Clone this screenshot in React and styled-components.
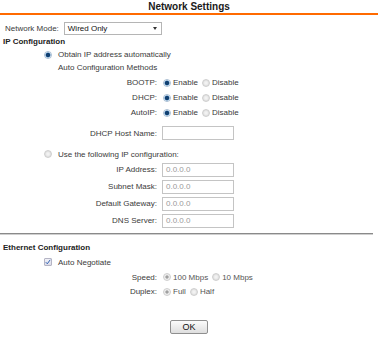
import styled, { createGlobalStyle } from "styled-components";

const GlobalStyle = createGlobalStyle`
  body {
    margin: 0;
    background: #fff;
    font-family: "Liberation Sans", Arial, sans-serif;
    font-size: 8px;
    color: #3a3a3a;
  }
`;

const Page = styled.div`
  width: 378px;
  display: flex;
  flex-direction: column;
`;

const Title = styled.h1`
  margin: 0;
  height: 13px;
  line-height: 13px;
  font-size: 10px;
  font-weight: 700;
  color: #1a1a1a;
  text-align: center;
  border-bottom: 2px solid #ff6a00;
`;

const ModeRow = styled.div`
  margin-top: 6px;
  height: 14px;
  padding-left: 5px;
  display: flex;
  align-items: center;
  gap: 5px;
`;

const SelectBox = styled.div`
  box-sizing: border-box;
  width: 98px;
  height: 13px;
  padding: 0 4px 0 3px;
  border: 1px solid #b5b5b5;
  display: flex;
  align-items: center;
  justify-content: space-between;
  color: #111;
  background: #fff;
`;

const Caret = styled.span`
  width: 0;
  height: 0;
  border-left: 2.5px solid transparent;
  border-right: 2.5px solid transparent;
  border-top: 3px solid #333;
`;

const SectionTitle = styled.div`
  margin-top: ${(p) => p.$top || 0}px;
  height: 12px;
  line-height: 12px;
  padding-left: 3px;
  font-weight: 700;
  color: #222;
`;

const OptionRow = styled.div`
  margin-top: ${(p) => p.$top || 0}px;
  height: ${(p) => p.$h || 13}px;
  padding-left: ${(p) => p.$indent || 44}px;
  display: flex;
  align-items: center;
  gap: 6px;
`;

const FieldRow = styled.div`
  margin-top: ${(p) => p.$top || 0}px;
  height: ${(p) => p.$h || 15}px;
  display: grid;
  grid-template-columns: 157px auto;
  column-gap: 5px;
  align-items: center;
`;

const Label = styled.span`
  text-align: right;
`;

const Choices = styled.div`
  display: flex;
  align-items: center;
  gap: 4px;
  padding-left: 1px;
  color: ${(p) => (p.$disabled ? "#555" : "inherit")};
`;

const Choice = styled.label`
  display: flex;
  align-items: center;
  gap: 2px;
`;

const Radio = styled.span`
  box-sizing: border-box;
  width: 8px;
  height: 8px;
  border-radius: 50%;
  flex: none;
  border: 1px solid ${(p) => (p.$checked && !p.$disabled ? "#a9bed2" : "#cfcfcf")};
  background: ${(p) =>
    p.$checked
      ? p.$disabled
        ? "radial-gradient(circle, #a0a0a0 0 1.4px, #ededed 1.8px)"
        : "radial-gradient(circle, #123f6e 0 1.6px, #3b78b4 2.2px, #e4eef7 2.8px)"
      : "radial-gradient(circle, #f2f2f2 0 1px, #dadada 3.5px)"};
`;

const Check = styled.span`
  box-sizing: border-box;
  width: 8px;
  height: 8px;
  flex: none;
  border: 1px solid #b4b4c4;
  border-radius: 1px;
  background: linear-gradient(#f2f2f8, #dcdce8);
  display: flex;
  align-items: center;
  justify-content: center;
`;

const TextBox = styled.div`
  box-sizing: border-box;
  width: 72px;
  height: 14px;
  padding-left: 3px;
  border: 1px solid #c4c4c4;
  display: flex;
  align-items: center;
  color: #9a9a9a;
  background: #fff;
`;

const Divider = styled.hr`
  margin: 4px 0 0;
  width: 373px;
  height: 0;
  border: none;
  border-top: 1px solid #8a8a8a;
  border-bottom: 1px solid #cfcfcf;
`;

const Footer = styled.div`
  margin-top: 21px;
  display: flex;
  justify-content: center;
`;

const Button = styled.button`
  box-sizing: border-box;
  width: 38px;
  height: 14px;
  padding: 0;
  border: 1px solid #8f8f8f;
  border-radius: 2px;
  background: linear-gradient(#fbfbfb, #dedede);
  font-family: "Liberation Sans", Arial, sans-serif;
  font-size: 9px;
  color: #111;
`;

const RadioPair = ({ options, selected, disabled }) => (
  <Choices $disabled={disabled}>
    {options.map((opt) => (
      <Choice key={opt}>
        <Radio $checked={opt === selected} $disabled={disabled} />
        {opt}
      </Choice>
    ))}
  </Choices>
);

const methods = ["BOOTP:", "DHCP:", "AutoIP:"];
const staticFields = ["IP Address:", "Subnet Mask:", "Default Gateway:", "DNS Server:"];

export default function App() {
  return (
    <Page>
      <GlobalStyle />
      <Title>Network Settings</Title>

      <ModeRow>
        <span>Network Mode:</span>
        <SelectBox>
          Wired Only
          <Caret />
        </SelectBox>
      </ModeRow>

      <SectionTitle $top={1}>IP Configuration</SectionTitle>
      <OptionRow>
        <Radio $checked />
        Obtain IP address automatically
      </OptionRow>
      <OptionRow $indent={58}>Auto Configuration Methods</OptionRow>

      {methods.map((m, i) => (
        <FieldRow key={m} $top={i === 0 ? 1 : 0}>
          <Label>{m}</Label>
          <RadioPair options={["Enable", "Disable"]} selected="Enable" />
        </FieldRow>
      ))}

      <FieldRow $top={6} $h={14}>
        <Label>DHCP Host Name:</Label>
        <TextBox />
      </FieldRow>

      <OptionRow $top={7} $h={14}>
        <Radio />
        Use the following IP configuration:
      </OptionRow>

      {staticFields.map((f) => (
        <FieldRow key={f} $h={17}>
          <Label>{f}</Label>
          <TextBox>0.0.0.0</TextBox>
        </FieldRow>
      ))}

      <Divider />

      <SectionTitle $top={7}>Ethernet Configuration</SectionTitle>
      <OptionRow $top={1} $h={14}>
        <Check>
          <svg width="6" height="6" viewBox="0 0 6 6">
            <path d="M0.8 3.2 L2.3 4.8 L5.2 0.8" fill="none" stroke="#3565b5" strokeWidth="1" />
          </svg>
        </Check>
        Auto Negotiate
      </OptionRow>

      <FieldRow $top={1} $h={14}>
        <Label>Speed:</Label>
        <RadioPair options={["100 Mbps", "10 Mbps"]} selected="100 Mbps" disabled />
      </FieldRow>
      <FieldRow $h={15}>
        <Label>Duplex:</Label>
        <RadioPair options={["Full", "Half"]} selected="Full" disabled />
      </FieldRow>

      <Footer>
        <Button>OK</Button>
      </Footer>
    </Page>
  );
}
